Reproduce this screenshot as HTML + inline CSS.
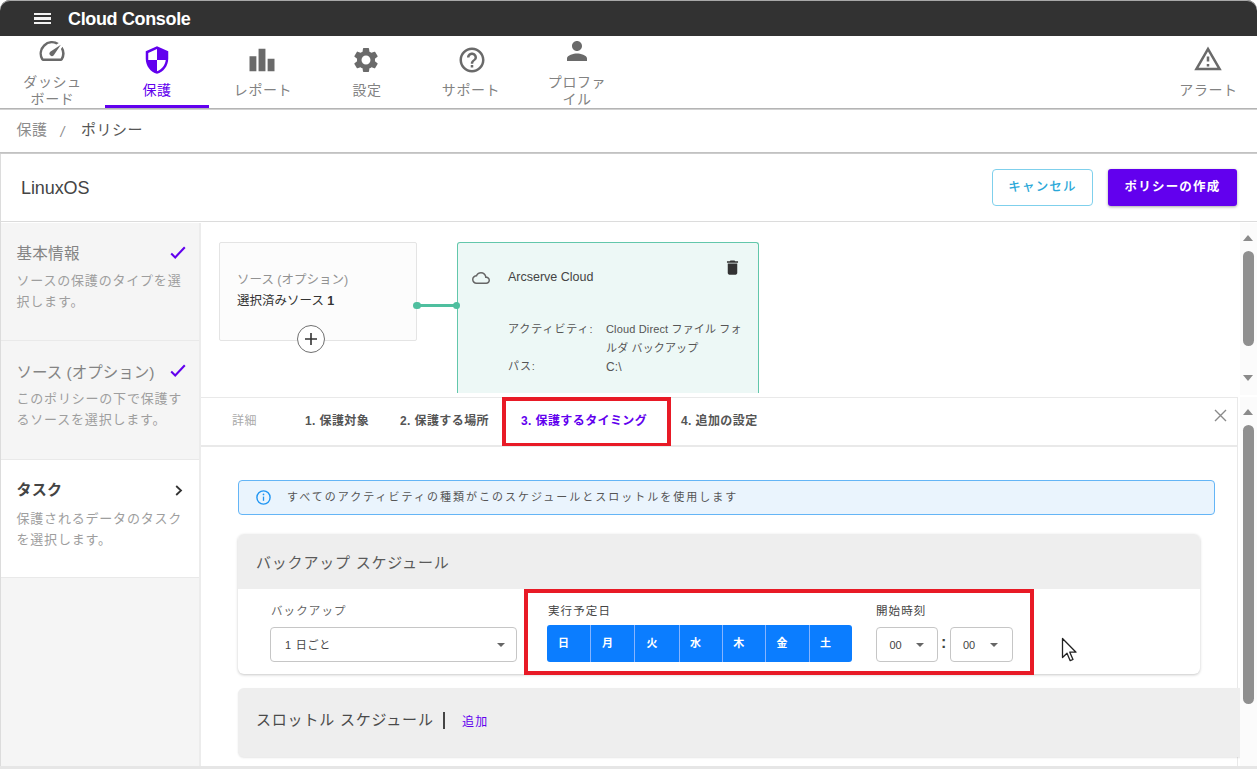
<!DOCTYPE html>
<html lang="ja">
<head>
<meta charset="utf-8">
<title>Cloud Console</title>
<style>
*{box-sizing:border-box;margin:0;padding:0}
html,body{width:1257px;height:769px;overflow:hidden;background:#fff}
body{font-family:"Liberation Sans","Noto Sans CJK JP",sans-serif;color:#4a4a4a;position:relative;font-size:12px}
.abs{position:absolute}
#top{left:0;top:0;width:1257px;height:36px;background:#323232;border-radius:10px 10px 0 0;box-shadow:inset 0 1px 0 #a8a8a8}
#top .title{left:68px;top:8px;color:#fff;font-weight:bold;font-size:18px;line-height:22px;letter-spacing:-0.35px;white-space:nowrap}
#top .ham{left:34px;top:13px;width:16.5px;height:12px}
#top .ham i{display:block;height:2.2px;background:#f2f2f2;margin-bottom:2.2px}
#nav{left:0;top:36px;width:1257px;height:73px;background:#fff;border-bottom:1px solid #b4b4b4;box-shadow:0 1px 1px rgba(0,0,0,.18)}
.ni{position:absolute;top:0;height:72px;text-align:center;color:#828282;font-size:14px;line-height:16.5px;letter-spacing:.6px}
.ni.act{color:#6200ee;border-bottom:3px solid #6200ee}
.ni svg{position:absolute}
.ni span{position:absolute;left:0;right:0;white-space:nowrap}
#crumb{left:0;top:110px;width:1257px;height:43px;background:#fff;border-bottom:1px solid #c2c2c2;box-shadow:0 1px 1px rgba(0,0,0,.2)}
#crumb div{position:absolute;top:11px;font-size:15px;line-height:18px;white-space:nowrap;letter-spacing:.5px}
#hdr{left:0;top:154px;width:1257px;height:68px;background:#fff;border-bottom:1px solid #dcdcdc}
#hdr .name{left:21px;top:23.5px;font-size:18px;line-height:20px;color:#444;letter-spacing:-.1px}
.btn{position:absolute;top:15px;height:37px;border-radius:3px;font-size:12.5px;line-height:35px;text-align:center;letter-spacing:1.2px;white-space:nowrap}
#side{left:0;top:223px;width:200.500px;height:543px;background:#f5f5f5;border-right:2px solid #ececec}
.st{position:absolute;left:0;width:198.500px;border-bottom:1px solid #e9e9e9}
.st .t{position:absolute;left:16.5px;font-size:15.5px;line-height:20px;color:#848484;white-space:nowrap;letter-spacing:.3px}
.st .d{position:absolute;left:16.5px;width:170px;font-size:13px;line-height:21px;color:#9e9e9e;letter-spacing:.8px}
#bottom{left:0;top:766px;width:1257px;height:6px;background:#e6e6e6}

.st .chk{position:absolute;left:170px}
#canvas{left:201px;top:223px;width:1037px;height:170px;overflow:hidden;background:#fff}
#src{left:219px;top:242px;width:198px;height:99px;background:#fcfcfc;border:1px solid #e4e4e4;border-radius:2px}
#dst{left:457px;top:242px;width:302px;height:160px;background:#edf8f6;border:1px solid #62c7ab;border-radius:3px}
.sm{position:absolute;font-size:11px;line-height:18px;color:#555;white-space:nowrap;letter-spacing:.15px}
#tabs{left:201px;top:397px;width:1037px;height:49px;background:#fff;border-top:1px solid #e9e9e9;border-bottom:1px solid #e9e9e9;border-right:1px solid #e9e9e9}
#tabs div{position:absolute;top:14px;font-size:12px;line-height:18px;font-weight:bold;color:#555;white-space:nowrap;letter-spacing:.4px}
#panel{left:201px;top:446px;width:1037px;height:320px;background:#fff;border-right:1px solid #e9e9e9;border-top:1px solid #e9e9e9;overflow:hidden}
.red{position:absolute;border:4px solid #e81a26}
.card{position:absolute;background:#fff;border-radius:6px;box-shadow:0 1px 3px rgba(0,0,0,.22);overflow:hidden}
.card .h{position:absolute;left:0;top:0;right:0;background:#eeeeee}
.card .ttl{position:absolute;left:18px;font-size:15px;line-height:20px;color:#5a5a5a;white-space:nowrap;letter-spacing:.8px}
.lbl{position:absolute;font-size:11.5px;line-height:16px;color:#666;white-space:nowrap;letter-spacing:1.1px}
.sel{position:absolute;height:36px;border:1px solid #c6c6c6;border-radius:4px;background:#fff;font-size:11px;line-height:34px;color:#444;white-space:nowrap}
.sel i{position:absolute;top:15px;width:0;height:0;border-left:4px solid transparent;border-right:4px solid transparent;border-top:4px solid #666}
.days{position:absolute;left:547px;top:624.500px;width:305px;height:37px;background:#0b7dff;border-radius:3px;overflow:hidden}
.days b{position:absolute;top:0;height:37px;width:44px;color:#fff;font-size:11px;line-height:37px;text-align:left;padding-left:11px;border-right:1px solid #86b4ff}
.sb{position:absolute;background:#fbfbfb}
.sb .th{position:absolute;left:3px;width:11px;border-radius:6px;background:#8f8f8f}
.sb .up,.sb .dn{position:absolute;left:2.500px;width:0;height:0;border-left:5.500px solid transparent;border-right:5.500px solid transparent}
.sb .up{border-bottom:6px solid #8a8a8a}
.sb .dn{border-top:6px solid #8a8a8a}
</style>
</head>
<body>
<div id="top" class="abs">
  <div class="ham abs"><i></i><i></i><i></i></div>
  <div class="title abs">Cloud Console</div>
</div>
<div id="nav" class="abs">
  <div class="ni" style="left:0;width:105px"><svg viewBox="0 0 24 24" width="30" height="30" style="left:37px;top:0px" fill="#6a6a6a"><path d="M20.38 8.57l-1.23 1.85a8 8 0 0 1-.22 7.58H5.07A8 8 0 0 1 15.58 6.85l1.85-1.23A10 10 0 0 0 3.35 19a2 2 0 0 0 1.72 1h13.85a2 2 0 0 0 1.74-1 10 10 0 0 0-.27-10.44zm-9.79 6.84a2 2 0 0 0 2.83 0l5.66-8.49-8.49 5.66a2 2 0 0 0 0 2.83z"/></svg><span style="top:38px">ダッシュ<br>ボード</span></div>
  <div class="ni act" style="left:105px;width:104px"><svg viewBox="0 0 24 24" width="30" height="30" style="left:37px;top:9px" fill="#6200ee"><path d="M12 1L3 5v6c0 5.55 3.84 10.74 9 12 5.16-1.26 9-6.45 9-12V5l-9-4zm0 10.99h7c-.53 4.12-3.28 7.79-7 8.94V12H5V6.3l7-3.11v8.8z"/></svg><span style="top:45.8px">保護</span></div>
  <div class="ni" style="left:209px;width:104px"><svg viewBox="0 0 24 24" width="30" height="30" style="left:38px;top:9px" fill="#6a6a6a"><path d="M7.5 21H2V9h5.5v12zm7.25-18h-5.5v18h5.5V3zM22 11h-5.5v10H22V11z"/></svg><span style="top:45.8px;left:4px">レポート</span></div>
  <div class="ni" style="left:313px;width:104px"><svg viewBox="0 0 24 24" width="30" height="30" style="left:38px;top:9px" fill="#6a6a6a"><path d="M19.14 12.94c.04-.3.06-.61.06-.94 0-.32-.02-.64-.07-.94l2.03-1.58c.18-.14.23-.41.12-.61l-1.92-3.32c-.12-.22-.37-.29-.59-.22l-2.39.96c-.5-.38-1.03-.7-1.62-.94l-.36-2.54c-.04-.24-.24-.41-.48-.41h-3.84c-.24 0-.43.17-.47.41l-.36 2.54c-.59.24-1.13.57-1.62.94l-2.39-.96c-.22-.08-.47 0-.59.22L2.74 8.87c-.12.21-.08.47.12.61l2.03 1.58c-.05.3-.09.63-.09.94s.02.64.07.94l-2.03 1.58c-.18.14-.23.41-.12.61l1.92 3.32c.12.22.37.29.59.22l2.39-.96c.5.38 1.03.7 1.62.94l.36 2.54c.05.24.24.41.48.41h3.84c.24 0 .44-.17.47-.41l.36-2.54c.59-.24 1.13-.56 1.62-.94l2.39.96c.22.08.47 0 .59-.22l1.92-3.32c.12-.22.07-.47-.12-.61l-2.01-1.58zM12 15.6c-1.98 0-3.6-1.62-3.6-3.6s1.62-3.6 3.6-3.6 3.6 1.62 3.6 3.6-1.62 3.6-3.6 3.6z"/></svg><span style="top:45.8px;left:4px">設定</span></div>
  <div class="ni" style="left:417px;width:104px"><svg viewBox="0 0 24 24" width="30" height="30" style="left:40px;top:9px" fill="#6a6a6a"><path d="M11 18h2v-2h-2v2zm1-16C6.48 2 2 6.48 2 12s4.48 10 10 10 10-4.48 10-10S17.52 2 12 2zm0 18c-4.41 0-8-3.59-8-8s3.59-8 8-8 8 3.59 8 8-3.590 8-8 8zm0-14c-2.210 0-4 1.790-4 4h2c0-1.100.900-2 2-2s2 .900 2 2c0 2-3 1.750-3 5h2c0-2.250 3-2.500 3-5 0-2.210-1.790-4-4-4z"/></svg><span style="top:45.8px;left:4px">サポート</span></div>
  <div class="ni" style="left:521px;width:110px"><svg viewBox="0 0 24 24" width="30" height="30" style="left:41px;top:0px" fill="#6a6a6a"><path d="M12 12c2.21 0 4-1.790 4-4s-1.790-4-4-4-4 1.790-4 4 1.790 4 4 4zm0 2c-2.670 0-8 1.340-8 4v2h16v-2c0-2.660-5.330-4-8-4z"/></svg><span style="top:38px;left:2px">プロファ<br>イル</span></div>
  <div class="ni" style="left:1160px;width:97px"><svg viewBox="0 0 24 24" width="30" height="30" style="left:33px;top:8px" fill="#6a6a6a"><path d="M12 5.990L19.530 19H4.470L12 5.990M12 2L1 21h22L12 2zm1 14h-2v2h2v-2zm0-6h-2v4h2v-4z"/></svg><span style="top:45.8px">アラート</span></div>
</div>
<div id="crumb" class="abs">
  <div style="left:16.5px;color:#8c8c8c">保護</div>
  <div style="left:60.5px;top:12.5px;color:#8c8c8c;font-size:14px;font-style:italic">/</div>
  <div style="left:81px;color:#555">ポリシー</div>
</div>
<div id="hdr" class="abs">
  <div class="name abs">LinuxOS</div>
  <div class="btn" style="left:992px;width:101px;border:1px solid #7fd0ec;color:#2aa7d8;background:#fff;font-weight:500;border-radius:4px">キャンセル</div>
  <div class="btn" style="left:1108px;width:129px;line-height:37px;background:#6200ee;color:#fff;font-weight:bold;box-shadow:0 1px 3px rgba(0,0,0,.35)">ポリシーの作成</div>
</div>
<div id="side" class="abs">
  <div class="st" style="top:0;height:118px"><div class="t" style="top:21px">基本情報</div><svg class="chk" style="top:23px" width="16" height="13" viewBox="0 0 16 13"><path d="M1.2 7.6L5.2 11.4L14.8 1.2" fill="none" stroke="#6200ee" stroke-width="2.1"/></svg><div class="d" style="top:47px">ソースの保護のタイプを選択します。</div></div>
  <div class="st" style="top:118px;height:119px"><div class="t" style="top:21.500px;letter-spacing:0">ソース (オプション)</div><svg class="chk" style="top:23px" width="16" height="13" viewBox="0 0 16 13"><path d="M1.2 7.6L5.2 11.4L14.8 1.2" fill="none" stroke="#6200ee" stroke-width="2.1"/></svg><div class="d" style="top:47px">このポリシーの下で保護するソースを選択します。</div></div>
  <div class="st" style="top:237px;height:118px;background:#fff"><div class="t" style="top:20px;color:#444;font-weight:bold;font-size:15px">タスク</div><svg class="chk" style="left:175px;top:25px" width="8" height="11" viewBox="0 0 8 11"><path d="M1.2 1L6 5.5L1.2 10" fill="none" stroke="#333" stroke-width="1.8"/></svg><div class="d" style="top:47.5px">保護されるデータのタスクを選択します。</div></div>
</div>

<div id="canvas" class="abs"></div>
<div id="src" class="abs">
  <div class="abs" style="left:17px;top:28.500px;font-size:12.5px;line-height:16px;color:#929292;white-space:nowrap;letter-spacing:0">ソース (オプション)</div>
  <div class="abs" style="left:17px;top:50px;font-size:12.5px;line-height:16px;color:#333;white-space:nowrap;letter-spacing:0">選択済みソース <b>1</b></div>
</div>
<div class="abs" style="left:297px;top:325px;width:28px;height:28px;border-radius:50%;border:1px solid #707070;background:#fff">
  <svg class="abs" style="left:6px;top:6px" width="14" height="14" viewBox="0 0 14 14"><path d="M7 1v12M1 7h12" stroke="#333" stroke-width="1.6" fill="none"/></svg>
</div>
<div class="abs" style="left:417px;top:304px;width:40px;height:2.6px;background:#4fbf9f"></div>
<div class="abs" style="left:413px;top:301.5px;width:7.6px;height:7.6px;border-radius:50%;background:#4fbf9f"></div>
<div id="dst" class="abs" style="height:151px;border-bottom:none;border-radius:3px 3px 0 0">
  <svg class="abs" style="left:14.3px;top:26px" width="18" height="18" viewBox="0 0 24 24" fill="#666"><path d="M19.35 10.040C18.670 6.590 15.640 4 12 4 9.110 4 6.600 5.640 5.350 8.040 2.340 8.360 0 10.910 0 14c0 3.310 2.690 6 6 6h13c2.760 0 5-2.240 5-5 0-2.640-2.050-4.780-4.650-4.960zM19 18H6c-2.210 0-4-1.790-4-4s1.790-4 4-4h.710C7.370 7.690 9.480 6 12 6c3.040 0 5.500 2.460 5.500 5.500v.5H19c1.660 0 3 1.340 3 3s-1.340 3-3 3z"/></svg>
  <div class="abs" style="left:50px;top:25px;font-size:12.5px;line-height:18px;color:#444;white-space:nowrap">Arcserve Cloud</div>
  <svg class="abs" style="left:265px;top:15px" width="19" height="19" viewBox="0 0 24 24" fill="#333"><path d="M6 19c0 1.100.900 2 2 2h8c1.100 0 2-.900 2-2V7H6v12zM19 4h-3.500l-1-1h-5l-1 1H5v2h14V4z"/></svg>
  <div class="sm" style="left:50px;top:77px;letter-spacing:.9px">アクティビティ:</div>
  <div class="sm" style="left:148px;top:77px">Cloud Direct ファイル フォ</div>
  <div class="sm" style="left:148px;top:95.700px">ルダ バックアップ</div>
  <div class="sm" style="left:50px;top:113.500px;letter-spacing:.9px">パス:</div>
  <div class="sm" style="left:148px;top:114.500px;font-size:12px">C:\</div>
</div>
<div class="abs" style="left:452.7px;top:301.5px;width:7.6px;height:7.6px;border-radius:50%;background:#4fbf9f"></div>

<div class="sb" style="left:1240px;top:223px;width:17px;height:172px"><div class="up" style="top:12px"></div><div class="th" style="top:28px;height:95px"></div><div class="dn" style="top:152px"></div></div>

<div id="tabs" class="abs">
  <div style="left:31px;color:#aaa;font-weight:normal">詳細</div>
  <div style="left:104px">1. 保護対象</div>
  <div style="left:199px">2. 保護する場所</div>
  <div style="left:320px;color:#6200ee">3. 保護するタイミング</div>
  <div style="left:480px">4. 追加の設定</div>
  <svg class="abs" style="left:1013px;top:11px" width="13" height="13" viewBox="0 0 13 13"><path d="M1 1l11 11M12 1L1 12" stroke="#8a8a8a" stroke-width="1.4" fill="none"/></svg>
</div>
<div class="red" style="left:502px;top:397px;width:169px;height:50px"></div>

<div id="panel" class="abs"></div>
<div class="abs" style="left:238px;top:480px;width:977px;height:35px;background:#eaf4fd;border:1px solid #64b5f6;border-radius:4px">
  <svg class="abs" style="left:17px;top:8.500px" width="15" height="15" viewBox="0 0 15 15"><circle cx="7.500" cy="7.500" r="6.600" fill="none" stroke="#2196f3" stroke-width="1.4"/><path d="M7.500 6.600v4.200" stroke="#2196f3" stroke-width="1.3"/><circle cx="7.500" cy="4.400" r=".85" fill="#2196f3"/></svg>
  <div class="abs" style="left:48px;top:6.500px;font-size:11px;line-height:18px;color:#555;white-space:nowrap;letter-spacing:2px">すべてのアクティビティの種類がこのスケジュールとスロットルを使用します</div>
</div>

<div class="card" style="left:238px;top:534px;width:962px;height:140px">
  <div class="h" style="height:55px"></div>
  <div class="ttl" style="top:19px">バックアップ スケジュール</div>
</div>
<div class="lbl" style="left:271px;top:603px">バックアップ</div>
<div class="sel" style="left:270px;top:626.500px;width:247px;height:35.500px"><span style="margin-left:14px;letter-spacing:.8px">1 日ごと</span><i style="left:226px"></i></div>
<div class="lbl" style="left:548px;top:603px;color:#444">実行予定日</div>
<div class="days">
  <b style="left:0px">日</b><b style="left:44px">月</b><b style="left:88.5px">火</b><b style="left:132px">水</b><b style="left:175.3px">木</b><b style="left:218.6px">金</b><b style="left:261.9px;border:none;width:45px">土</b>
</div>
<div class="lbl" style="left:876px;top:603px;color:#444">開始時刻</div>
<div class="sel" style="left:876px;top:626.500px;width:62px;height:35.500px"><span style="margin-left:12.500px">00</span><i style="left:39px"></i></div>
<div class="abs" style="left:941px;top:632px;font-size:16px;line-height:22px;font-weight:bold;color:#444">:</div>
<div class="sel" style="left:949.500px;top:626.500px;width:63px;height:35.500px"><span style="margin-left:12.500px">00</span><i style="left:39px"></i></div>
<div class="red" style="left:524px;top:588.5px;width:509.5px;height:86px;border-width:4.5px"></div>
<svg class="abs" style="left:1061px;top:637px" width="17" height="26" viewBox="0 0 17 26"><path d="M1.500 1.500v19l4.500-4.200 3.200 7.400 2.800-1.200-3.200-7.300h6.200z" fill="#fff" stroke="#222" stroke-width="1.300" stroke-linejoin="round"/></svg>

<div class="card" style="left:238px;top:687.500px;width:1010px;height:69px;border-radius:6px 0 0 6px;background:#eeeeee;box-shadow:0 1px 2px rgba(0,0,0,.1)">
  <div class="ttl" style="top:22.500px;color:#4a4a4a">スロットル スケジュール</div>
  <div class="abs" style="left:205px;top:24.500px;width:1.500px;height:17px;background:#444"></div>
  <div class="abs" style="left:224px;top:25px;font-size:12px;line-height:18px;color:#6200ee;white-space:nowrap;letter-spacing:1.2px">追加</div>
</div>

<div class="sb" style="left:1240px;top:397px;width:17px;height:369px"><div class="up" style="top:12px"></div><div class="th" style="top:28px;height:279px"></div></div>
<div class="abs" style="left:0;top:154px;width:1px;height:615px;background:#dcdcdc"></div>
<div id="bottom" class="abs"></div>
</body>
</html>
